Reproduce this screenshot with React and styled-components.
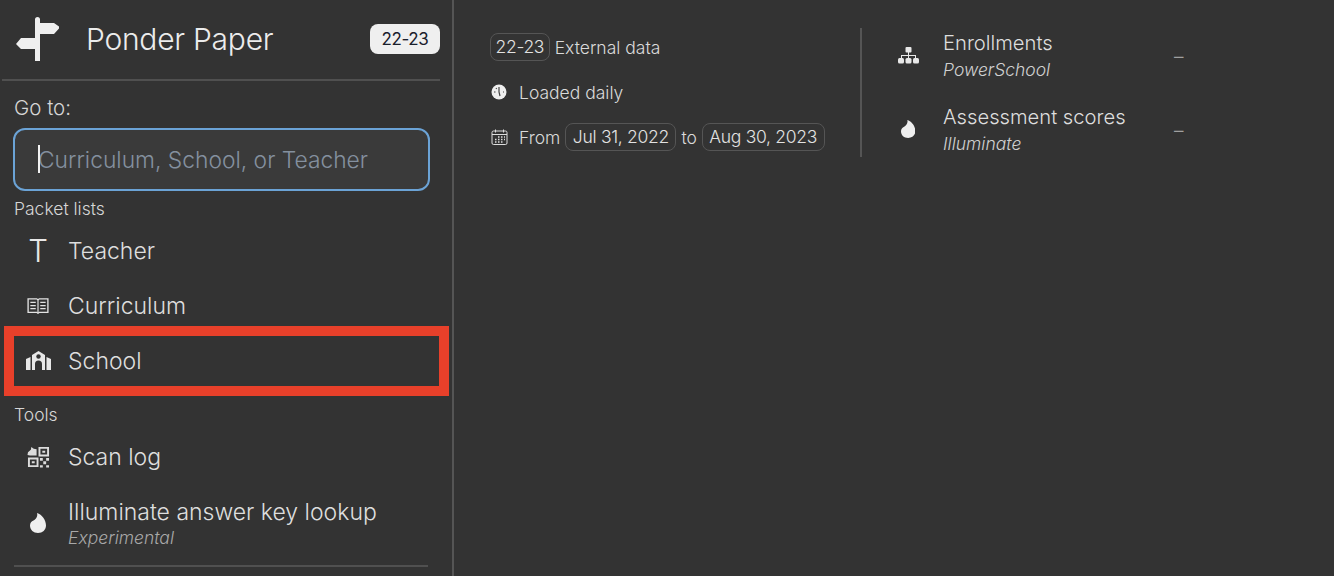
import React from 'react';
import styled, { createGlobalStyle } from 'styled-components';

const fontStack = 'Inter, Roboto, "Liberation Sans", sans-serif';

const GlobalStyle = createGlobalStyle`
  html, body {
    margin: 0;
    height: 100%;
    background: #333333;
  }
  body {
    font-family: ${fontStack};
    font-weight: 300;
    color: #e2e2e2;
    overflow: hidden;
  }
`;

const Page = styled.div`
  display: flex;
  height: 576px;
  width: 1334px;
  position: relative;
  overflow: hidden;
`;

const Sidebar = styled.aside`
  width: 454px;
  height: 576px;
  flex: none;
  box-sizing: border-box;
  border-right: 2px solid #555555;
  padding: 0 12px 0 2px;
`;

const Brand = styled.header`
  display: flex;
  align-items: center;
  height: 77px;
  padding: 0 0 2px 13px;
  border-bottom: 2px solid #505050;
  width: 425px;
`;

const BrandName = styled.h1`
  margin: 0 0 0 25px;
  flex: 1;
  font-size: 30px;
  font-weight: 300;
  letter-spacing: -0.25px;
  color: #ececec;
`;

const YearBadge = styled.span`
  width: 70px;
  height: 30px;
  line-height: 30px;
  text-align: center;
  border-radius: 8px;
  background: #efefef;
  color: #1a202c;
  font-size: 17px;
  font-weight: 400;
  letter-spacing: -0.4px;
`;

const Label = styled.div`
  margin: ${(p) => p.$top || 0}px 0 2px 12px;
  font-size: ${(p) => p.$size || 17.5}px;
  line-height: 24px;
  color: #d6d6d6;
`;

const SearchBox = styled.div`
  position: relative;
  width: 417px;
  height: 63px;
  margin: 8px 0 6px 11px;
`;

const SearchInput = styled.input`
  display: block;
  box-sizing: border-box;
  width: 100%;
  height: 100%;
  padding: 0 23px;
  border: 2px solid #6ba3d6;
  border-radius: 12px;
  background: #3a3a3a;
  color: #eeeeee;
  font: 300 22.8px ${fontStack};
  outline: none;
  &::placeholder {
    color: #84909f;
    opacity: 1;
  }
`;

const Caret = styled.span`
  position: absolute;
  left: 25px;
  top: 17px;
  width: 2px;
  height: 28px;
  background: #f2f2f2;
`;

const NavRow = styled.a`
  display: flex;
  align-items: center;
  height: 55px;
  margin-top: ${(p) => p.$top || 0}px;
  padding-left: 22px;
  color: #dedede;
`;

const IconSlot = styled.span`
  display: flex;
  align-items: center;
  justify-content: center;
  width: 28px;
  margin-right: 16px;
  flex: none;
`;

const NavText = styled.div`
  display: flex;
  flex-direction: column;
`;

const NavTitle = styled.span`
  font-size: 23px;
  line-height: 30px;
`;

const Sub = styled.em`
  font-size: ${(p) => p.$size || 17.5}px;
  line-height: 22px;
  font-weight: 300;
  color: ${(p) => p.$color || '#a8a8a8'};
`;

const BottomRule = styled.hr`
  margin: 15px 0 0 12px;
  width: 414px;
  height: 2px;
  border: 0;
  background: #505050;
`;

const Main = styled.main`
  display: flex;
  align-items: flex-start;
  padding: 28px 0 0 36px;
`;

const InfoColumn = styled.section`
  display: flex;
  flex-direction: column;
  gap: 15px;
  width: 372px;
  height: 129px;
  box-sizing: border-box;
  border-right: 2px solid #555555;
`;

const InfoRow = styled.div`
  display: flex;
  align-items: center;
  gap: 5px;
  height: 30px;
  margin-top: ${(p) => p.$top || 0}px;
  font-size: 17.5px;
  color: #dadada;
`;

const InfoIcon = styled.span`
  display: flex;
  width: 18px;
  margin-right: 5px;
  margin-left: 1px;
`;

const Chip = styled.span`
  box-sizing: border-box;
  height: 28px;
  line-height: 26px;
  padding: 0 ${(p) => p.$pad || 6.5}px;
  border: 1px solid #555555;
  border-radius: 8px;
  letter-spacing: -0.3px;
  color: #e2e2e2;
`;

const SourceColumn = styled.section`
  display: flex;
  flex-direction: column;
  gap: 20px;
  width: 330px;
  padding-left: 32px;
`;

const SourceRow = styled.div`
  display: flex;
  align-items: center;
  height: 54px;
`;

const SourceIcon = styled.span`
  display: flex;
  justify-content: center;
  width: 28px;
  margin-right: 21px;
`;

const SourceText = styled.div`
  display: flex;
  flex-direction: column;
  gap: 2px;
  width: 231px;
`;

const SourceTitle = styled.span`
  font-size: 20.2px;
  line-height: 28px;
  color: #dedede;
`;

const Dash = styled.span`
  padding-top: 3px;
  font-size: 19px;
  color: #a0a0a0;
`;

const Highlight = styled.div`
  position: absolute;
  left: 4px;
  top: 326px;
  width: 445px;
  height: 70px;
  box-sizing: border-box;
  border: 10px solid #e8402a;
  pointer-events: none;
`;

const TeacherGlyph = styled.span`
  font-size: 31px;
  line-height: 1;
  color: #e8e8e8;
`;

const SignpostIcon = () => (
  <svg width="46" height="46" viewBox="0 0 46 46" fill="#efefef">
    <path d="M20 3.500a2.500 2.500 0 0 1 5 0V7h14l5 3.500v2L39 18H25v27h-5V33H6l-5-5 5-6h14z" />
  </svg>
);

const BookIcon = () => (
  <svg width="22" height="18" viewBox="0 0 24 20" fill="none" stroke="#e2e2e2" strokeWidth="1.500">
    <path d="M1 2h9.500l1.500 1 1.500-1H23v15H13.500l-1.500 1-1.500-1H1z" />
    <path d="M12 3v15M3.500 6h6M3.500 9.500h6M3.500 13h6M14.500 6h6M14.500 9.500h6M14.500 13h6" strokeWidth="1.300" />
  </svg>
);

const SchoolIcon = () => (
  <svg width="25" height="20" viewBox="0 0 25 20" fill="#e8e8e8">
    <path d="M12.500 0 19 4v15h-3v-6a3.500 3.500 0 0 0-7 0v6H6V4z" />
    <circle cx="12.500" cy="5.500" r="2.200" fill="#333" />
    <path d="M0 8 4.500 6v13H0zM25 8l-4.500-2v13H25z" />
  </svg>
);

const QrIcon = () => (
  <svg width="23" height="22" viewBox="0 0 24 23" fill="#dcdcdc">
    <path d="M1 6.500 4 4l.5-3 2.500 2 3 .5V10H3L.5 9.500z" />
    <path fillRule="evenodd" d="M12 1h11v10H12zM14 3v6h7V3zM1 12h11v10H1zM3 14v6h7v-6z" />
    <path d="M16 5h3v2h-3zM5 16h3v2H5zM13.500 12.500h3v3h-3zM20 12.500h3v3h-3zM17 16h3v3h-3zM13.500 20h3v2.500h-3zM20 20h3v2.500h-3z" />
  </svg>
);

const FlameIcon = ({ size = 20 }) => (
  <svg width={size * 0.8} height={size} viewBox="0 0 16 20" fill="#efefef">
    <path d="M7 0c5 1.500 9 7 9 12.500 0 4.500-3.500 7.500-8 7.500s-8-3-8-7.500c0-2.500 1.500-4.200 3.500-5C6 6 8 3.500 7 0z" />
  </svg>
);

const ClockIcon = () => (
  <svg width="16" height="16" viewBox="0 0 16 16">
    <circle cx="8" cy="8" r="7.500" fill="#efefef" />
    <path d="M8 3v5l1 4M3 8h1.500M12 8h1M5 4l.7 1" stroke="#444" strokeWidth="1.200" fill="none" />
  </svg>
);

const CalendarIcon = () => (
  <svg width="17" height="16" viewBox="0 0 17 16" fill="none" stroke="#dedede" strokeWidth="1">
    <rect x="1" y="2" width="15" height="13.500" rx="1.500" />
    <path d="M1 5.500h15M4.500 .5v3M12.500 .5v3" />
    <path d="M7 8h1.500M10 8h1.500M13 8h1M4 10.500h1.500M7 10.500h1.500M10 10.500h1.500M13 10.500h1M4 13h1.500M7 13h1.500M10 13h1.500" strokeWidth="1.400" />
  </svg>
);

const TreeIcon = () => (
  <svg width="21" height="17" viewBox="0 0 21 17" fill="#e8e8e8">
    <rect x="7.500" y="0" width="6" height="5.500" rx="1" />
    <path d="M10 5h1v3h7v3h-1V9h-6v2h-1V9H4v2H3V8h7z" />
    <rect x="0" y="11" width="6" height="5.500" rx="1.500" />
    <rect x="7.500" y="11" width="6" height="5.500" rx="1.500" />
    <rect x="15" y="11" width="6" height="5.500" rx="1.500" />
  </svg>
);

export default function App() {
  return (
    <>
      <GlobalStyle />
      <Page>
        <Sidebar>
          <Brand>
            <SignpostIcon />
            <BrandName>Ponder Paper</BrandName>
            <YearBadge>22-23</YearBadge>
          </Brand>
          <Label $size={20.5} $top={15}>Go to:</Label>
          <SearchBox>
            <SearchInput placeholder="Curriculum, School, or Teacher" />
            <Caret />
          </SearchBox>
          <Label>Packet lists</Label>
          <NavRow>
            <IconSlot><TeacherGlyph>T</TeacherGlyph></IconSlot>
            <NavTitle>Teacher</NavTitle>
          </NavRow>
          <NavRow>
            <IconSlot><BookIcon /></IconSlot>
            <NavTitle>Curriculum</NavTitle>
          </NavRow>
          <NavRow>
            <IconSlot><SchoolIcon /></IconSlot>
            <NavTitle>School</NavTitle>
          </NavRow>
          <Label $top={15}>Tools</Label>
          <NavRow>
            <IconSlot><QrIcon /></IconSlot>
            <NavTitle>Scan log</NavTitle>
          </NavRow>
          <NavRow $top={11}>
            <IconSlot><FlameIcon /></IconSlot>
            <NavText>
              <NavTitle>Illuminate answer key lookup</NavTitle>
              <Sub>Experimental</Sub>
            </NavText>
          </NavRow>
          <BottomRule />
        </Sidebar>
        <Main>
          <InfoColumn>
            <InfoRow $top={4}>
              <Chip $pad={4.5}>22-23</Chip>
              External data
            </InfoRow>
            <InfoRow>
              <InfoIcon><ClockIcon /></InfoIcon>
              Loaded daily
            </InfoRow>
            <InfoRow>
              <InfoIcon><CalendarIcon /></InfoIcon>
              From <Chip>Jul 31, 2022</Chip> to <Chip>Aug 30, 2023</Chip>
            </InfoRow>
          </InfoColumn>
          <SourceColumn>
            <SourceRow>
              <SourceIcon><TreeIcon /></SourceIcon>
              <SourceText>
                <SourceTitle>Enrollments</SourceTitle>
                <Sub $color="#d0d0d0">PowerSchool</Sub>
              </SourceText>
              <Dash>–</Dash>
            </SourceRow>
            <SourceRow>
              <SourceIcon><FlameIcon size={18} /></SourceIcon>
              <SourceText>
                <SourceTitle>Assessment scores</SourceTitle>
                <Sub $color="#d0d0d0">Illuminate</Sub>
              </SourceText>
              <Dash>–</Dash>
            </SourceRow>
          </SourceColumn>
        </Main>
        <Highlight />
      </Page>
    </>
  );
}
